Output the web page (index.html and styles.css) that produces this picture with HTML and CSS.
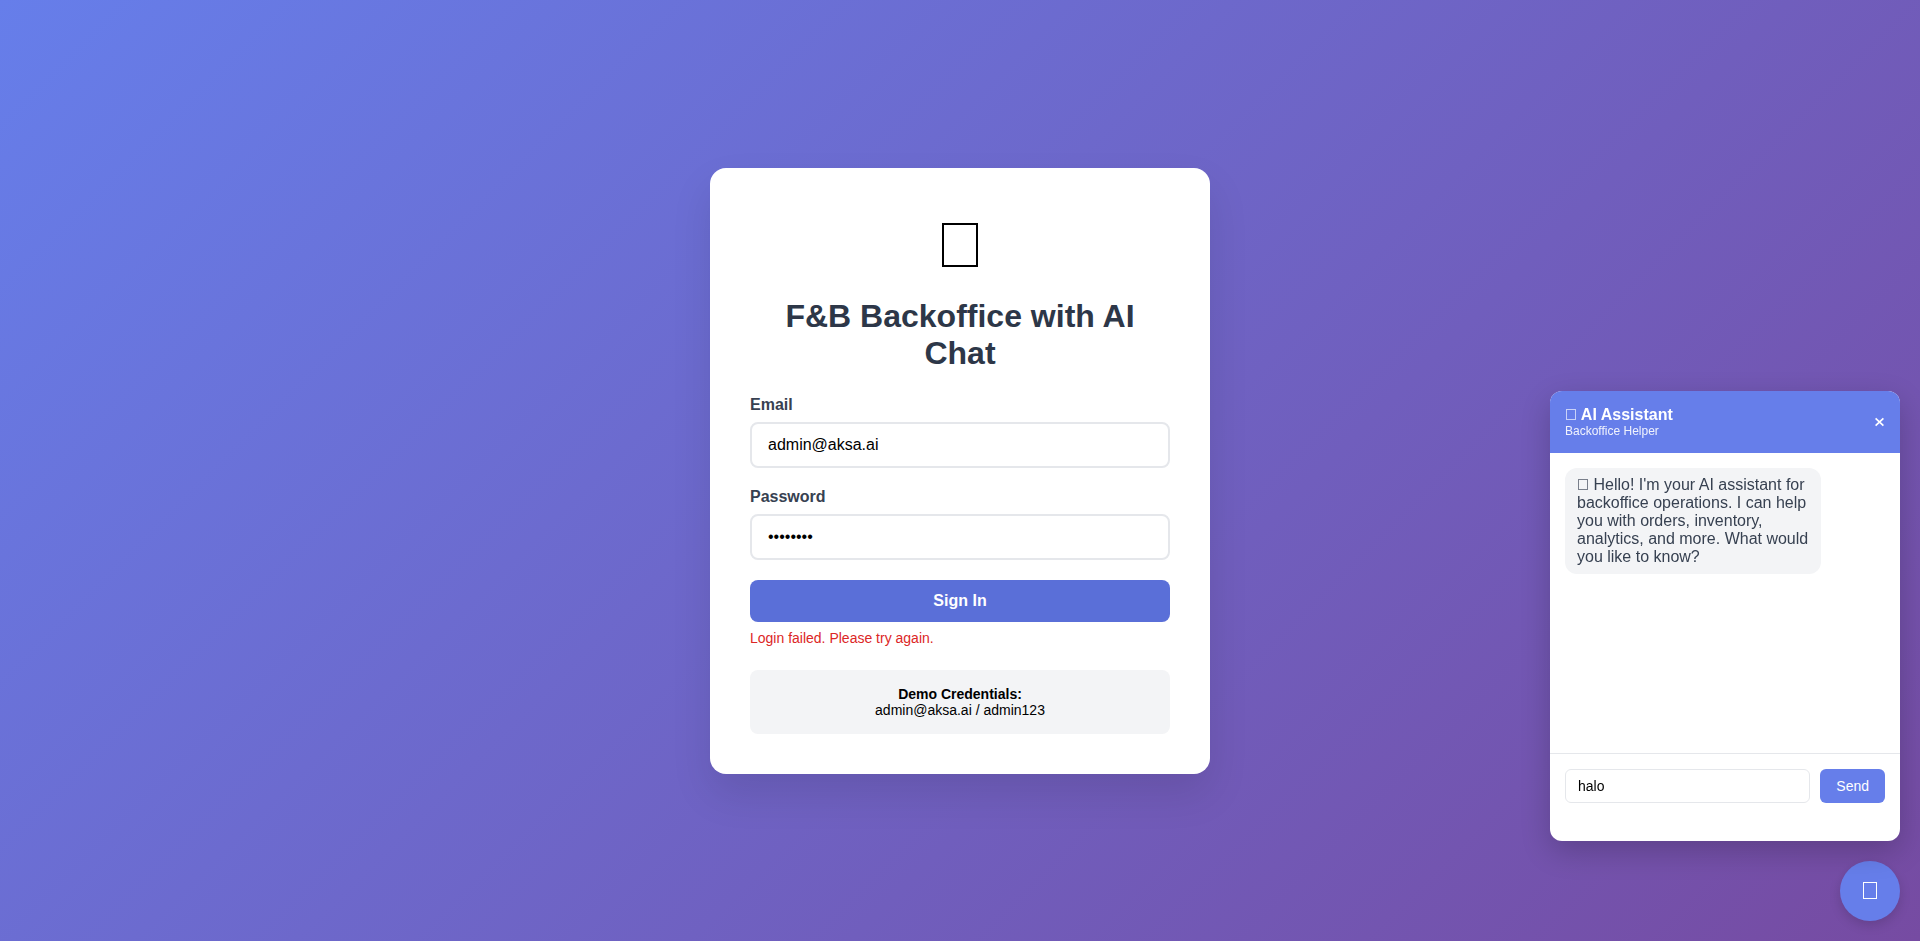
FILE: index.html
```
<!DOCTYPE html>
<html lang="en">
<head>
<meta charset="utf-8">
<meta name="viewport" content="width=device-width, initial-scale=1">
<title>F&amp;B Backoffice with AI Chat</title>
<link rel="stylesheet" href="styles.css">
</head>
<body>
<main class="login-page">
  <section class="login-card">
    <div class="logo"><span class="logo-box"></span></div>
    <h1 class="title">F&amp;B Backoffice with AI Chat</h1>
    <form class="login-form">
      <div class="field">
        <label class="field-label" for="email">Email</label>
        <input class="field-input" id="email" type="email" value="admin@aksa.ai">
      </div>
      <div class="field">
        <label class="field-label" for="password">Password</label>
        <input class="field-input" id="password" type="password" value="admin123">
      </div>
      <button class="sign-in" type="button">Sign In</button>
    </form>
    <div class="error" role="alert">Login failed. Please try again.</div>
    <div class="demo"><strong>Demo Credentials:</strong><br>admin@aksa.ai / admin123</div>
  </section>
</main>
<aside class="chat">
  <section class="chat-window">
    <header class="chat-header">
      <div>
        <div class="chat-title"><span class="text-box"></span> AI Assistant</div>
        <div class="chat-subtitle">Backoffice Helper</div>
      </div>
      <button class="chat-close" type="button" aria-label="Close">
        <svg class="chat-close-icon" viewBox="0 0 11 10" width="11" height="10" fill="none" stroke="currentColor" stroke-width="1.7"><path d="M1.6 1.4 9.4 8.6M9.4 1.4 1.6 8.6"/></svg>
      </button>
    </header>
    <div class="chat-messages">
      <div class="message"><span class="text-box"></span> Hello! I'm your AI assistant for backoffice operations. I can help you with orders, inventory, analytics, and more. What would you like to know?</div>
    </div>
    <form class="chat-form">
      <input class="chat-input" type="text" value="halo" aria-label="Message">
      <button class="chat-send" type="button">Send</button>
    </form>
  </section>
  <button class="chat-toggle" type="button" aria-label="Chat"><span class="toggle-box"></span></button>
</aside>
</body>
</html>
```
FILE: styles.css
```
* {
  box-sizing: border-box;
}

body {
  margin: 0;
  font-family: "Liberation Sans", Arial, sans-serif;
  font-size: 16px;
}

button,
input {
  font-family: inherit;
}

.login-page {
  display: flex;
  align-items: center;
  justify-content: center;
  min-height: 100vh;
  background: linear-gradient(135deg, #667eea 0%, #764ba2 100%);
}

.login-card {
  width: 100%;
  max-width: 500px;
  padding: 40px;
  border-radius: 16px;
  background: #fff;
  box-shadow: 0 20px 40px rgba(0, 0, 0, 0.1);
}

.logo {
  display: flex;
  justify-content: center;
  margin-bottom: 16px;
  padding: 15px 0;
}

.logo-box {
  width: 36px;
  height: 44px;
  border: 2px solid #000;
}

.title {
  margin: 0 0 24px;
  color: #2d3748;
  font-size: 32px;
  text-align: center;
}

.field {
  margin-bottom: 20px;
}

.field-label {
  display: block;
  margin-bottom: 8px;
  color: #374151;
  font-weight: 600;
}

.field-input {
  display: block;
  width: 100%;
  padding: 12px 16px;
  border: 2px solid #e5e7eb;
  border-radius: 8px;
  background: #fff;
  color: #000;
  font-size: 16px;
}

.sign-in {
  display: block;
  width: 100%;
  padding: 12px;
  border: 0;
  border-radius: 8px;
  background: #5a6fd8;
  color: #fff;
  font-size: 16px;
  font-weight: 600;
}

.error {
  margin-top: 8px;
  color: #dc2626;
  font-size: 14px;
}

.demo {
  margin-top: 24px;
  padding: 16px;
  border-radius: 8px;
  background: #f3f4f6;
  color: #000;
  font-size: 14px;
  text-align: center;
}

.chat {
  position: fixed;
  right: 20px;
  bottom: 20px;
  display: flex;
  flex-direction: column;
  align-items: flex-end;
  gap: 20px;
}

.chat-window {
  z-index: 1;
  width: 350px;
  min-height: 450px;
  overflow: hidden;
  border-radius: 12px;
  background: #fff;
  box-shadow: 0 10px 30px rgba(0, 0, 0, 0.2);
}

.chat-header {
  display: flex;
  align-items: center;
  justify-content: space-between;
  padding: 15px;
  background: #667eea;
  color: #fff;
}

.chat-title {
  font-weight: 600;
}

.text-box {
  display: inline-block;
  width: 10px;
  height: 11px;
  margin: 0 1px;
  border: 1px solid;
  opacity: 0.65;
}

.chat-subtitle {
  font-size: 12px;
  opacity: 0.9;
}

.chat-close {
  padding: 0;
  border: 0;
  background: none;
  color: #fff;
}

.chat-close-icon {
  display: block;
}

.chat-messages {
  height: 300px;
  padding: 15px;
  overflow-y: auto;
}

.message {
  max-width: 80%;
  padding: 8px 12px;
  border-radius: 12px;
  background: #f3f4f6;
  color: #374151;
}

.chat-form {
  display: flex;
  gap: 10px;
  padding: 15px;
  border-top: 1px solid #e5e7eb;
}

.chat-input {
  flex: 1;
  min-width: 0;
  padding: 8px 12px;
  border: 1px solid #e5e7eb;
  border-radius: 6px;
  background: #fff;
  color: #000;
  font-size: 14px;
}

.chat-send {
  padding: 8px 16px;
  border: 0;
  border-radius: 6px;
  background: #667eea;
  color: #fff;
  font-size: 14px;
}

.chat-toggle {
  display: flex;
  align-items: center;
  justify-content: center;
  width: 60px;
  height: 60px;
  padding: 0 0 1px;
  border: 0;
  border-radius: 50%;
  background: #667eea;
  color: #fff;
  box-shadow: 0 4px 12px rgba(0, 0, 0, 0.15);
}

.toggle-box {
  width: 14px;
  height: 17px;
  border: 1px solid;
}
```
